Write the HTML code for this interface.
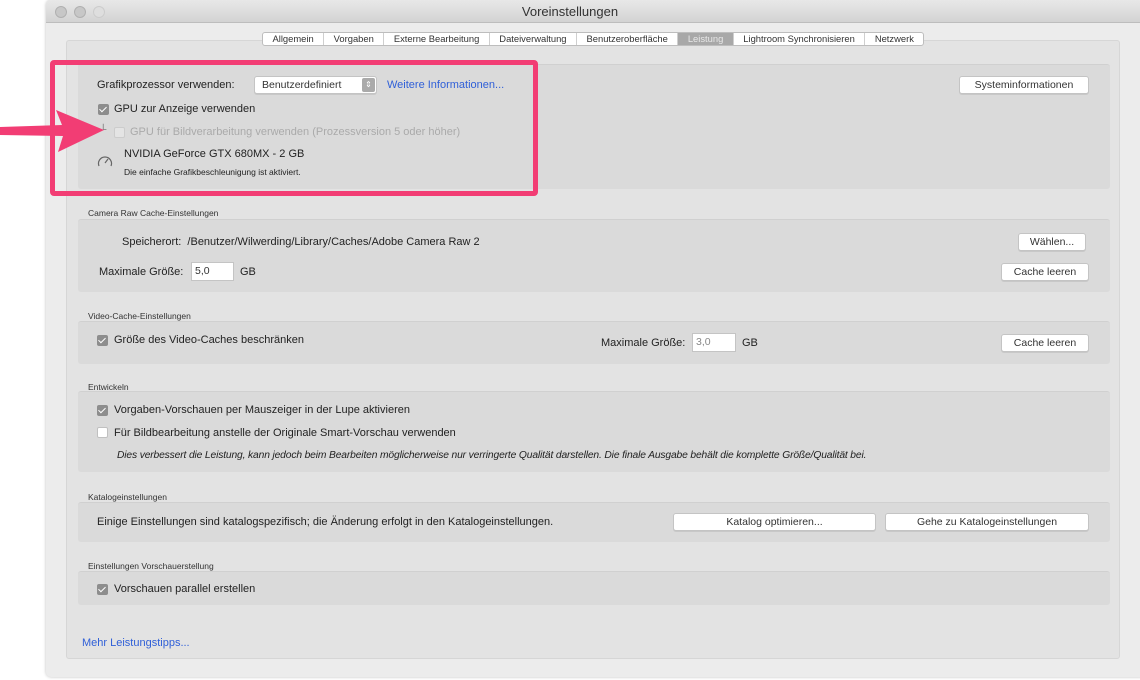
<!DOCTYPE html>
<html><head><meta charset="utf-8"><style>
*{box-sizing:border-box;margin:0;padding:0}
body{width:1140px;height:680px;background:#fff;position:relative;overflow:hidden;font-family:"Liberation Sans",sans-serif;color:#222;font-size:11px}
.a{position:absolute;white-space:nowrap}
.win{position:absolute;left:46px;top:0;width:1100px;height:677px;background:#ececec;border-radius:5px;box-shadow:0 0 3px rgba(0,0,0,.25)}
.title{position:absolute;left:46px;top:0;width:1100px;height:23px;background:linear-gradient(#e8e8e8,#d3d3d3);border-bottom:1px solid #bdbdbd;border-radius:5px 5px 0 0}
.dot{position:absolute;top:6px;width:12px;height:12px;border-radius:50%;background:#c7c7c7;border:1px solid #b0b0b0}
.panel{position:absolute;left:66px;top:40px;width:1054px;height:619px;background:#e3e3e3;border:1px solid #d6d6d6;border-radius:3px}
.sec{position:absolute;left:78px;width:1032px;background:#dadada;border-top:1px solid #d0d0d0;border-radius:3px}
.lbl{font-size:8.5px;color:#333}
.btn{position:absolute;background:#fff;border:1px solid #c4c4c4;border-radius:3px;text-align:center;font-size:10.5px;line-height:16px;height:18px;color:#333;box-shadow:0 1px 0 rgba(0,0,0,.08)}
.cb{position:absolute;width:11px;height:11px;border-radius:2px;background:#8d8d8d}
.cb:after{content:"";position:absolute;left:3px;top:1px;width:3px;height:6px;border:solid #fff;border-width:0 1.5px 1.5px 0;transform:rotate(45deg)}
.cbe{position:absolute;width:11px;height:11px;border-radius:2px;background:#fff;border:1px solid #c0c0c0}
.inp{position:absolute;background:#fff;border:1px solid #c4c4c4;height:19px;font-size:10.5px;line-height:17px;padding-left:3px;color:#333}
.tabs{position:absolute;left:262px;top:32px;height:14px;display:flex;border:1px solid #bdbdbd;border-radius:3px;background:#fff;font-size:9.4px;line-height:12px}
.tabs span{padding:0 9.5px;border-right:1px solid #cfcfcf;color:#333}
.tabs span:last-child{border:none}
</style></head><body>
<div class="win"></div>
<div class="title"></div>
<div class="dot" style="left:55px"></div><div class="dot" style="left:74px"></div><div class="dot" style="left:93px;background:#dedede;border-color:#ccc"></div>
<div class="a" style="left:0;width:1140px;top:4px;text-align:center;font-size:13px;color:#333">Voreinstellungen</div>
<div class="panel"></div>
<div class="tabs"><span>Allgemein</span><span>Vorgaben</span><span>Externe Bearbeitung</span><span>Dateiverwaltung</span><span>Benutzeroberfläche</span><span style="background:#a8a8a8;color:#e8e8e8">Leistung</span><span>Lightroom Synchronisieren</span><span>Netzwerk</span></div>

<div class="sec" style="top:64px;height:125px"></div>
<div class="a" style="left:97px;top:79px">Grafikprozessor verwenden:</div>
<div class="btn" style="left:254px;top:76px;width:123px;text-align:left;padding-left:7px">Benutzerdefiniert<span style="position:absolute;right:1px;top:1px;width:13px;height:14px;background:#aaa;border-radius:2px;color:#fff;font-size:8px;line-height:14px;text-align:center">⇕</span></div>
<div class="a" style="left:387px;top:79px;color:#2f5fd8">Weitere Informationen...</div>
<div class="btn" style="left:959px;top:76px;width:130px">Systeminformationen</div>
<div class="cb" style="left:98px;top:104px"></div>
<div class="a" style="left:114px;top:103px">GPU zur Anzeige verwenden</div>
<div class="a" style="left:100px;top:124px;color:#666;font-size:9px">└</div>
<div class="cbe" style="left:114px;top:127px;border-color:#ccc;background:#e4e4e4"></div>
<div class="a" style="left:130px;top:126px;color:#aaa">GPU für Bildverarbeitung verwenden (Prozessversion 5 oder höher)</div>
<svg class="a" style="left:97px;top:154px" width="16" height="14" viewBox="0 0 16 14"><path d="M2 12 A6.5 6.5 0 1 1 14 12" fill="none" stroke="#666" stroke-width="1.2"/><path d="M8 9 L11 5" stroke="#666" stroke-width="1.2"/></svg>
<div class="a" style="left:124px;top:148px;font-size:11px">NVIDIA GeForce GTX 680MX - 2 GB</div>
<div class="a" style="left:124px;top:167px;font-size:8.5px">Die einfache Grafikbeschleunigung ist aktiviert.</div>

<div class="a lbl" style="left:88px;top:208px">Camera Raw Cache-Einstellungen</div>
<div class="sec" style="top:219px;height:73px"></div>
<div class="a" style="left:122px;top:236px">Speicherort:&nbsp; /Benutzer/Wilwerding/Library/Caches/Adobe Camera Raw 2</div>
<div class="btn" style="left:1018px;top:233px;width:68px">Wählen...</div>
<div class="a" style="left:99px;top:266px">Maximale Größe:</div>
<div class="inp" style="left:191px;top:262px;width:43px">5,0</div>
<div class="a" style="left:240px;top:266px">GB</div>
<div class="btn" style="left:1001px;top:263px;width:88px">Cache leeren</div>

<div class="a lbl" style="left:88px;top:311px">Video-Cache-Einstellungen</div>
<div class="sec" style="top:321px;height:43px"></div>
<div class="cb" style="left:97px;top:335px"></div>
<div class="a" style="left:114px;top:334px">Größe des Video-Caches beschränken</div>
<div class="a" style="left:601px;top:337px">Maximale Größe:</div>
<div class="inp" style="left:692px;top:333px;width:44px;color:#888">3,0</div>
<div class="a" style="left:742px;top:337px">GB</div>
<div class="btn" style="left:1001px;top:334px;width:88px">Cache leeren</div>

<div class="a lbl" style="left:88px;top:382px">Entwickeln</div>
<div class="sec" style="top:391px;height:81px"></div>
<div class="cb" style="left:97px;top:405px"></div>
<div class="a" style="left:114px;top:404px">Vorgaben-Vorschauen per Mauszeiger in der Lupe aktivieren</div>
<div class="cbe" style="left:97px;top:427px"></div>
<div class="a" style="left:114px;top:427px">Für Bildbearbeitung anstelle der Originale Smart-Vorschau verwenden</div>
<div class="a" style="left:117px;top:450px;font-style:italic;font-size:10px;letter-spacing:-0.15px;transform:scaleX(1.03);transform-origin:left">Dies verbessert die Leistung, kann jedoch beim Bearbeiten möglicherweise nur verringerte Qualität darstellen. Die finale Ausgabe behält die komplette Größe/Qualität bei.</div>

<div class="a lbl" style="left:88px;top:492px">Katalogeinstellungen</div>
<div class="sec" style="top:502px;height:40px"></div>
<div class="a" style="left:97px;top:516px">Einige Einstellungen sind katalogspezifisch; die Änderung erfolgt in den Katalogeinstellungen.</div>
<div class="btn" style="left:673px;top:513px;width:203px">Katalog optimieren...</div>
<div class="btn" style="left:885px;top:513px;width:204px">Gehe zu Katalogeinstellungen</div>

<div class="a lbl" style="left:88px;top:561px">Einstellungen Vorschauerstellung</div>
<div class="sec" style="top:571px;height:34px"></div>
<div class="cb" style="left:97px;top:584px"></div>
<div class="a" style="left:114px;top:583px">Vorschauen parallel erstellen</div>
<div class="a" style="left:82px;top:637px;color:#2f5fd8">Mehr Leistungstipps...</div>

<div class="a" style="left:50px;top:60px;width:488px;height:136px;border:5px solid #f23d74;border-radius:4px"></div>
<svg class="a" style="left:0;top:108px" width="108" height="46" viewBox="0 0 108 46"><path d="M0 19 L62 17 L56 2 L104 22 L58 44 L63 28 L0 27 Z" fill="#f23d74"/></svg>
</body></html>
